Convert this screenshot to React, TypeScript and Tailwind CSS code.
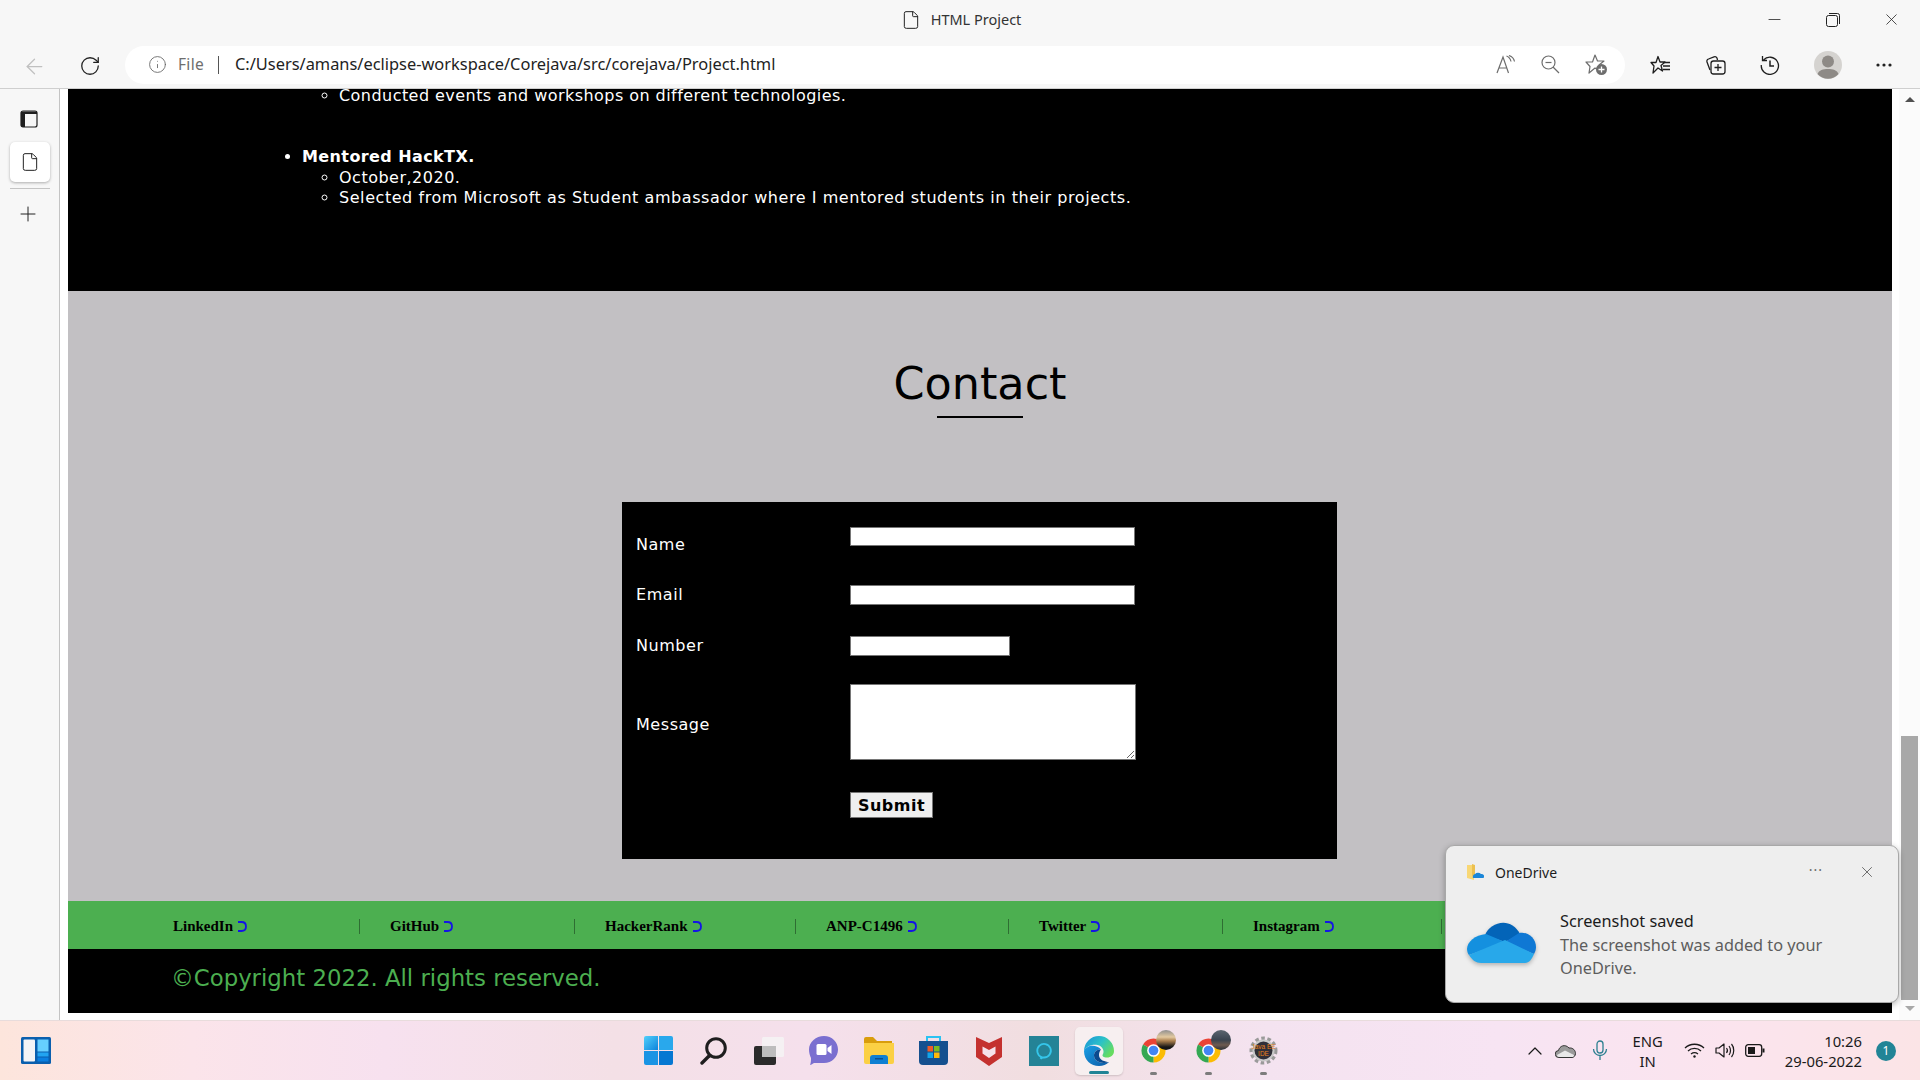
import React from "react";
import { ArrowLeft, ChevronUp, File, Info, Minus, Plus, RotateCw, X } from "lucide-react";

const uiFont = "font-['Noto_Sans','Open_Sans',sans-serif]";
const pageFont = "font-['DejaVu_Sans',sans-serif]";

const links = [
  { name: "LinkedIn", cell: "w-[217px]" },
  { name: "GitHub", cell: "w-[215px]" },
  { name: "HackerRank", cell: "w-[221px]" },
  { name: "ANP-C1496", cell: "w-[213px]" },
  { name: "Twitter", cell: "w-[214px]" },
  { name: "Instagram", cell: "w-[219px]" },
];

const fields = [
  { label: "Name", row: "h-[58px]", pad: "pt-[8px]", input: "w-[285px] h-[19px]" },
  { label: "Email", row: "h-[51px]", pad: "", input: "w-[285px] h-[20px]" },
  { label: "Number", row: "h-[48px]", pad: "", input: "w-[160px] h-[20px]" },
];

const ExternalMark = () => (
  <svg width="10" height="11" viewBox="0 0 10 11" fill="none" className="ml-[4px] shrink-0">
    <path d="M1 1 H4.5 C7.5 1 9 3 9 5.5 C9 8 7.5 10 4.5 10 H1" stroke="#1414e6" strokeWidth="1.8" />
  </svg>
);

const TabsIcon = () => (
  <svg width="18" height="18" viewBox="0 0 18 18" fill="none">
    <rect x="1" y="1" width="16" height="16" rx="2" stroke="#1f1f1f" strokeWidth="1.2" />
    <path d="M1 1.5 H17 V4 H5 V17 H2.5 A1.5 1.5 0 0 1 1 15.5 Z" fill="#1f1f1f" />
  </svg>
);

const FavoritesIcon = () => (
  <svg width="21" height="20" viewBox="0 0 21 20" fill="none" stroke="#1f1f1f" strokeWidth="1.3">
    <path d="M8 1.5 L10 7 H15 L11 10.5 L12.5 16 L8 13 L3 18 L4 11 L1 7.5 H6 Z" strokeLinejoin="round" />
    <path d="M14 7.5 H20 M13 11 H20 M13 14.5 H20" />
  </svg>
);

const CollectionsIcon = () => (
  <svg width="21" height="20" viewBox="0 0 21 20" fill="none" stroke="#1f1f1f" strokeWidth="1.3">
    <path d="M5 15 L2 7 C1.6 5.5 2 4.5 3.5 4 L9 1.8 C10.5 1.3 11.5 2 12 3 L12.5 5" />
    <rect x="6" y="6" width="14" height="13" rx="2.5" />
    <path d="M13 9 V16 M9.5 12.5 H16.5" />
  </svg>
);

const HistoryIcon = () => (
  <svg width="20" height="20" viewBox="0 0 20 20" fill="none" stroke="#1f1f1f" strokeWidth="1.3">
    <path d="M3.5 5 A8.6 8.6 0 1 1 1.3 10" />
    <path d="M2.5 1 V5.5 H7" />
    <path d="M10 5.5 V11 H14" strokeWidth="1.5" />
  </svg>
);

const ReadAloudIcon = () => (
  <svg width="20" height="19" viewBox="0 0 20 19" fill="none" stroke="#6d6d6d" strokeWidth="1.2">
    <path d="M1 18 L7 2 L12.5 18 M3 13 H11" />
    <path d="M10.5 1 C13 2 14.5 4 15 6.5 M13 0.5 C16 1.5 18 4 18.5 6.5" />
  </svg>
);

const ZoomOutIcon = () => (
  <svg width="19" height="19" viewBox="0 0 19 19" fill="none" stroke="#6d6d6d" strokeWidth="1.2">
    <circle cx="7.5" cy="7.5" r="6.5" />
    <path d="M12 12 L18 18" />
    <path d="M4.5 7.5 H10.5" />
  </svg>
);

const StarPlusIcon = () => (
  <svg width="22" height="21" viewBox="0 0 22 21" fill="none">
    <path d="M10 1 L12.5 7 H19 L14 11 L15 17 L10 14 L4 19 L5 12.5 L1 8 H7.5 Z" stroke="#6d6d6d" strokeWidth="1.2" strokeLinejoin="round" />
    <circle cx="16.5" cy="15.5" r="5.5" fill="#6d6d6d" />
    <path d="M16.5 12.5 V18.5 M13.5 15.5 H19.5" stroke="#fff" strokeWidth="1.3" />
  </svg>
);

const Avatar = () => (
  <svg width="28" height="28" viewBox="0 0 28 28">
    <circle cx="14" cy="14" r="14" fill="#d5d3d0" />
    <circle cx="14" cy="10.5" r="6" fill="#8e8a86" />
    <path d="M3.5 23 C5 19 9 18 14 18 C19 18 23 19 24.5 23 A14 14 0 0 1 3.5 23 Z" fill="#8e8a86" />
  </svg>
);

const WidgetsIcon = () => (
  <svg width="30" height="27" viewBox="0 0 30 27">
    <rect width="30" height="27" rx="1.5" fill="#0a5fae" />
    <rect x="2.5" y="2.5" width="11.5" height="22" rx="1" fill="#f4f4f6" />
    <rect x="16.5" y="2.5" width="11" height="12" fill="#66cfff" />
    <rect x="16.5" y="15.5" width="11" height="4" fill="#21a4f1" />
    <rect x="16.5" y="20.5" width="11" height="4" fill="#0a7fe0" />
  </svg>
);

const StartIcon = () => (
  <svg width="29" height="29" viewBox="0 0 29 29">
    <defs>
      <linearGradient id="startA" x1="0" y1="0" x2="1" y2="1">
        <stop offset="0" stopColor="#52d0fb" />
        <stop offset="1" stopColor="#0d84dc" />
      </linearGradient>
    </defs>
    <path d="M2 0 H14 V14 H0 V2 A2 2 0 0 1 2 0 Z" fill="url(#startA)" />
    <path d="M15 0 H27 A2 2 0 0 1 29 2 V14 H15 Z" fill="#29a8ec" />
    <path d="M0 15 H14 V29 H2 A2 2 0 0 1 0 27 Z" fill="#1a94e4" />
    <path d="M15 15 H29 V27 A2 2 0 0 1 27 29 H15 Z" fill="#0678d2" />
  </svg>
);

const SearchIcon = () => (
  <svg width="27" height="28" viewBox="0 0 27 28" fill="none">
    <circle cx="16" cy="11" r="9.3" stroke="#1e1e1e" strokeWidth="3" />
    <path d="M9 19 L2 26" stroke="#1e1e1e" strokeWidth="3.4" strokeLinecap="round" />
  </svg>
);

const TaskViewIcon = () => (
  <svg width="30" height="28" viewBox="0 0 30 28">
    <rect x="0" y="9" width="22" height="19" rx="2" fill="#2b2b2b" />
    <rect x="8" y="0" width="22" height="20" rx="1.5" fill="#f5f5f5" fillOpacity="0.8" />
    <rect x="8" y="9" width="14" height="11" fill="#bdbdbd" />
  </svg>
);

const ChatIcon = () => (
  <svg width="29" height="30" viewBox="0 0 29 30">
    <path d="M15 0 C23 0 29 6 29 13.5 C29 21 23 27 15 27 H5 C3 28 2 29 1 29 C2 26.5 2 24 2 22 C0.8 19.5 0 16.5 0 13.5 C0 6 7 0 15 0 Z" fill="#7a6fd0" />
    <rect x="7.5" y="8" width="10" height="11" rx="1.5" fill="#fff" />
    <path d="M18.5 12 L22.5 9 V18 L18.5 15 Z" fill="#fff" />
  </svg>
);

const ExplorerIcon = () => (
  <svg width="30" height="27" viewBox="0 0 30 27">
    <path d="M0 2 A2 2 0 0 1 2 0 H9 L13 4 H28 V10 H0 Z" fill="#d99d0c" />
    <path d="M0 6 H30 V25 A2 2 0 0 1 28 27 H2 A2 2 0 0 1 0 25 Z" fill="#fbd044" />
    <path d="M6 21 A3 3 0 0 1 9 18 H21 A3 3 0 0 1 24 21 V27 H6 Z" fill="#0f7fd2" />
    <rect x="11" y="21" width="8" height="1.5" fill="#0a4f90" />
  </svg>
);

const StoreIcon = () => (
  <svg width="29" height="31" viewBox="0 0 29 31" fill="none">
    <path d="M8 7 V2 H21 V7" stroke="#2bc2f2" strokeWidth="2" />
    <path d="M0 6 H29 V26 A4 4 0 0 1 25 30 H4 A4 4 0 0 1 0 26 Z" fill="#15508f" />
    <rect x="8.5" y="11" width="5.5" height="5.5" fill="#ef5a28" />
    <rect x="15" y="11" width="5.5" height="5.5" fill="#7cbb20" />
    <rect x="8.5" y="17.5" width="5.5" height="5.5" fill="#12a5ea" />
    <rect x="15" y="17.5" width="5.5" height="5.5" fill="#fdb90a" />
  </svg>
);

const McAfeeIcon = () => (
  <svg width="28" height="31" viewBox="0 0 28 31">
    <path d="M1 2 L14 8 L27 2 V22 L14 31 L1 22 Z" fill="#c4312f" />
    <path d="M7.5 11.5 L14 15 L20.5 11.5 V18.5 L14 23 L7.5 18.5 Z" fill="#f5e2ea" />
  </svg>
);

const AlexaIcon = () => (
  <svg width="30" height="30" viewBox="0 0 30 30" fill="none">
    <rect width="30" height="30" fill="#248396" />
    <path d="M12.5 21 A6.8 6.8 0 1 1 15 21.5 C13.8 21.5 12.8 21.3 11.5 22.8 Z" stroke="#35c6ea" strokeWidth="1.8" />
  </svg>
);

const EdgeIcon = () => (
  <svg width="32" height="32" viewBox="0 0 32 32">
    <defs>
      <linearGradient id="edgeTop" x1="0" y1="0" x2="1" y2="0.6">
        <stop offset="0" stopColor="#1a8fd8" />
        <stop offset="0.55" stopColor="#2bc2c8" />
        <stop offset="1" stopColor="#66dc60" />
      </linearGradient>
      <linearGradient id="edgeLeft" x1="0" y1="0" x2="1" y2="1">
        <stop offset="0" stopColor="#1aa0e6" />
        <stop offset="1" stopColor="#0c5aa6" />
      </linearGradient>
    </defs>
    <path d="M1 16 A15 15 0 0 1 31 16 C31 20 28 22.5 24 22.5 C20.5 22.5 18.5 21 20 19 C21.5 16.5 20 11 14.5 10 C8 9 3 12 1 16 Z" fill="url(#edgeTop)" />
    <path d="M1 16 C1 25 8 31 16 31 C20 31 23.5 29.5 26 27 C20 29.5 11 27 11 20.5 C11 17 14 14 18 14.5 C13 8.5 3 10 1 16 Z" fill="url(#edgeLeft)" />
    <path d="M11 20.5 C11 27 20 29.5 26 27 C22 27 16 25 16 20 C16 17.5 17 15.5 18 14.5 C14 14 11 17 11 20.5 Z" fill="#0b4a8e" />
  </svg>
);

const ChromeIcon = () => (
  <svg width="29" height="29" viewBox="0 0 48 48">
    <path d="M24 24 L6.7 14 A20 20 0 0 1 41.3 14 Z" fill="#ea4335" />
    <path d="M24 24 L41.3 14 A20 20 0 0 1 24 44 Z" fill="#fbbc04" />
    <path d="M24 24 L24 44 A20 20 0 0 1 6.7 14 Z" fill="#34a853" />
    <circle cx="24" cy="24" r="10.5" fill="#fff" />
    <circle cx="24" cy="24" r="8" fill="#4285f4" />
  </svg>
);

const JavaIdeIcon = () => (
  <svg width="29" height="29" viewBox="0 0 29 29" fill="none">
    <circle cx="14.5" cy="14.5" r="12" stroke="#9a9a9a" strokeWidth="4" strokeDasharray="3.5 2.5" />
    <circle cx="14.5" cy="14.5" r="11" fill="#c9c9c9" />
    <circle cx="14.5" cy="14.5" r="9" fill="#2f2f38" />
    <text x="14.5" y="13" textAnchor="middle" fontSize="6.5" fontFamily="Liberation Sans" fill="#e8801c">Java EE</text>
    <text x="14.5" y="20" textAnchor="middle" fontSize="6.5" fontFamily="Liberation Sans" fill="#e8801c">IDE</text>
  </svg>
);

const OneDriveFolder = () => (
  <svg width="17" height="17" viewBox="0 0 17 17">
    <path d="M0 1 H6 L7 3 V16 L0 14 Z" fill="#f8d775" />
    <path d="M5 0 L8 1 V12 H5 Z" fill="#ecc04f" />
    <path d="M6 14 A3 3 0 0 1 8 10 A4 4 0 0 1 14 10 A2.5 2.5 0 0 1 16.5 14 Z" fill="#1a86d8" />
  </svg>
);

const OneDriveCloud = () => (
  <svg width="70" height="46" viewBox="0 0 70 46" className="drop-shadow-[0_2px_2px_rgba(0,0,0,0.25)]">
    <path d="M18 17 C23 4 44 -2 53 16 L38 24 Z" fill="#0364b8" />
    <path d="M52 15 C62 13 69 21 69 29 C69 32 68 34 67 36 L38 24 Z" fill="#0f78d4" />
    <path d="M19 16 C8 17 0 24 0 31 C0 33 1 36 2 37 L38 24 Z" fill="#1490df" />
    <path d="M2 37 C5 42 9 45 14 45 H58 C62 45 65 41 67 36 L38 22 Z" fill="#28a8ea" />
  </svg>
);

const TrayCloud = () => (
  <svg width="21" height="14" viewBox="0 0 21 14">
    <path d="M4 13.5 A3.5 3.5 0 0 1 3.5 6.5 C4.5 2 10 -0.5 14 4 C18 3.5 20.5 6.5 20.5 9.5 C20.5 12 18.5 13.5 17 13.5 Z" fill="#9a9a9a" stroke="#333" strokeWidth="1" />
    <path d="M2 11 L10 6.5 L19 11 C19 12.5 18 13 17 13 H4 C3 13 2 12 2 11 Z" fill="#e8e8e8" />
  </svg>
);

const MicIcon = () => (
  <svg width="16" height="21" viewBox="0 0 16 21" fill="none" stroke="#2b7f90" strokeWidth="1.3">
    <rect x="5" y="1" width="6" height="12" rx="3" />
    <path d="M1.5 9 A6.5 6.5 0 0 0 14.5 9 M8 15.5 V20" />
  </svg>
);

const WifiIcon = () => (
  <svg width="21" height="15" viewBox="0 0 21 15" fill="none" stroke="#1a1a1a" strokeWidth="1.3">
    <path d="M1 5 C6 0 15 0 20 5 M4 8 C7.5 4.5 13.5 4.5 17 8 M7 11 C9 9.5 12 9.5 14 11" />
    <circle cx="10.5" cy="13.5" r="1.2" fill="#1a1a1a" stroke="none" />
  </svg>
);

const VolumeIcon = () => (
  <svg width="20" height="17" viewBox="0 0 20 17" fill="none" stroke="#1a1a1a" strokeWidth="1.2">
    <path d="M1 6 H4 L9 2 V15 L4 11 H1 Z" strokeLinejoin="round" />
    <path d="M11.5 6 C12.7 7.5 12.7 9.5 11.5 11 M14 4 C16 6.5 16 10.5 14 13 M16.5 2 C19.5 5.5 19.5 11.5 16.5 15" />
  </svg>
);

const BatteryIcon = () => (
  <svg width="20" height="13" viewBox="0 0 20 13" fill="none">
    <rect x="0.7" y="0.7" width="16" height="11.6" rx="2.5" stroke="#1a1a1a" strokeWidth="1.3" />
    <rect x="3" y="3" width="7" height="7" fill="#1a1a1a" />
    <rect x="17.5" y="4.5" width="2" height="4" fill="#1a1a1a" />
  </svg>
);

const dockIcons = [
  <StartIcon key="start" />,
  <SearchIcon key="search" />,
  <TaskViewIcon key="taskview" />,
  <ChatIcon key="chat" />,
  <ExplorerIcon key="explorer" />,
  <StoreIcon key="store" />,
  <McAfeeIcon key="mcafee" />,
  <AlexaIcon key="alexa" />,
];

const App: React.FC = () => {
  return (
    <div className={`relative w-[1920px] h-[1080px] overflow-hidden flex flex-col bg-white ${uiFont}`}>
      {/* browser chrome */}
      <header className="h-[89px] shrink-0 bg-[#f7f7f7] border-b border-[#cfcfcf] flex flex-col">
        <div className="h-[45px] flex items-center">
          <div className="flex-1" />
          <div className="flex items-center gap-[10px] ml-[21px] -mt-[5px]">
            <File size={20} strokeWidth={1.2} className="text-[#222]" />
            <span className="text-[14.5px] text-[#333]">HTML Project</span>
          </div>
          <div className="flex-1 flex justify-end items-center gap-[42px] pr-[19px] -mt-[6px]">
            <Minus size={19} strokeWidth={1} className="text-[#222]" />
            <svg width="14" height="14" viewBox="0 0 14 14" fill="none" stroke="#222" strokeWidth="1">
              <rect x="0.5" y="2.5" width="11" height="11" rx="2" />
              <path d="M3 0.5 H11.5 A2 2 0 0 1 13.5 2.5 V11" />
            </svg>
            <X size={19} strokeWidth={1} className="text-[#222]" />
          </div>
        </div>
        <div className="flex-1 flex items-center pl-[22px]">
          <ArrowLeft size={25} strokeWidth={1.2} className="text-[#c0c0c0]" />
          <RotateCw size={22} strokeWidth={1.4} className="ml-[32px] -mt-[2px] text-[#222]" />
          <div className="ml-[24px] w-[1500px] h-[38px] -mt-[4px] rounded-full bg-white flex items-center pl-[23px] pr-[18px]">
            <Info size={19} strokeWidth={1.1} className="text-[#666]" />
            <span className="ml-[11px] text-[15.5px] text-[#6e6e6e] tracking-[0.3px]">File</span>
            <div className="ml-[14px] w-px h-[18px] bg-[#555]" />
            <span className="ml-[16px] text-[16.4px] text-[#222]">C:/Users/amans/eclipse-workspace/Corejava/src/corejava/Project.html</span>
            <div className="ml-auto flex items-center gap-[25px]">
              <ReadAloudIcon />
              <ZoomOutIcon />
              <StarPlusIcon />
            </div>
          </div>
          <div className="ml-[25px] -mt-[4px] flex items-center gap-[34px]">
            <FavoritesIcon />
            <CollectionsIcon />
            <HistoryIcon />
            <Avatar />
            <svg width="16" height="4" viewBox="0 0 16 4" fill="#222">
              <circle cx="2" cy="2" r="1.6" />
              <circle cx="8" cy="2" r="1.6" />
              <circle cx="14" cy="2" r="1.6" />
            </svg>
          </div>
        </div>
      </header>

      <div className="flex flex-1 min-h-0">
        {/* vertical tabs */}
        <aside className="w-[60px] shrink-0 bg-[#f7f7f7] border-r border-[#c4c4c4] flex flex-col items-center">
          <div className="mt-[21px] -ml-[2px]">
            <TabsIcon />
          </div>
          <div className="mt-[14px] w-[40px] h-[40px] rounded-[5px] bg-white shadow-[0_1px_3px_rgba(0,0,0,0.3)] flex items-center justify-center">
            <File size={20} strokeWidth={1.2} className="text-[#222]" />
          </div>
          <div className="mt-[6px] w-[40px] h-px bg-[#c4c4c4]" />
          <Plus size={24} strokeWidth={1} className="mt-[13px] -ml-[3px] text-[#222]" />
        </aside>

        {/* page */}
        <main className={`w-[1824px] ml-[8px] shrink-0 overflow-hidden flex flex-col ${pageFont}`}>
          <section className="h-[202px] shrink-0 bg-black text-white text-[16px] leading-[20.5px] tracking-[0.5px]">
            <ul className="list-disc pl-[234px]">
              <li className="list-none">
                <ul className="list-[circle] pl-[37px]">
                  <li className="leading-[13px] tracking-[0.45px]">Conducted events and workshops on different technologies.</li>
                </ul>
              </li>
              <li className="mt-[45px]">
                <strong className="font-bold tracking-[0.4px]">Mentored HackTX.</strong>
                <ul className="list-[circle] pl-[37px]">
                  <li>October,2020.</li>
                  <li className="tracking-[0.56px]">Selected from Microsoft as Student ambassador where I mentored students in their projects.</li>
                </ul>
              </li>
            </ul>
          </section>

          <section className="h-[610px] shrink-0 bg-[#c2c0c3] flex flex-col items-center">
            <h2 className="mt-[65px] text-[44.5px] leading-[56px] text-black">Contact</h2>
            <div className="mt-[4px] w-[86px] h-[2px] bg-black" />
            <form className="mt-[84px] mr-[1px] w-[715px] h-[357px] bg-black pt-[25px] pl-[14px] text-white text-[16px] leading-[20px] tracking-[0.55px]">
              {fields.map((f) => (
                <div key={f.label} className={`flex items-start ${f.row}`}>
                  <label className={`w-[214px] ${f.pad}`}>{f.label}</label>
                  <input className={`bg-white border border-[#767676] ${f.input}`} />
                </div>
              ))}
              <div className="flex items-start h-[108px]">
                <label className="w-[214px] pt-[31px]">Message</label>
                <textarea className="w-[286px] h-[76px] bg-white border border-[#767676] resize" />
              </div>
              <div className="pl-[214px]">
                <button type="button" className="w-[83px] h-[26px] pt-[2px] bg-[#efefef] border border-[#767676] text-black text-[16px] font-bold tracking-[0.5px]">
                  Submit
                </button>
              </div>
            </form>
          </section>

          <nav className="h-[48px] shrink-0 bg-[#4caf50] flex items-center pl-[75px] font-['Liberation_Serif',serif] font-bold text-[15px] text-black">
            {links.map((l) => (
              <div key={l.name} className={`h-[15px] pl-[30px] flex items-center border-r border-[#2f6e33] translate-y-[1px] ${l.cell}`}>
                <span>{l.name}</span>
                <ExternalMark />
              </div>
            ))}
          </nav>

          <footer className="h-[64px] shrink-0 bg-black flex items-center pl-[103px] pb-[5px] text-[22.8px] text-[#4caf50]">
            ©Copyright 2022. All rights reserved.
          </footer>
        </main>

        {/* scrollbar */}
        <div className="w-[21px] ml-[7px] shrink-0 bg-[#fbfbfb] flex flex-col items-center">
          <div className="mt-[8px] w-0 h-0 border-x-[5px] border-x-transparent border-b-[5px] border-b-[#505050]" />
          <div className="mt-[634px] w-[17px] h-[264px] bg-[#a8a8a8]" />
          <div className="mt-[6px] w-0 h-0 border-x-[5px] border-x-transparent border-t-[5px] border-t-[#a8a8a8]" />
        </div>
      </div>

      {/* taskbar */}
      <div className="h-[60px] shrink-0 border-t border-[#e8dcdc] flex items-center bg-[linear-gradient(90deg,#fde5dc_0%,#fbe4ea_10%,#f7e1ef_20%,#f4e0e6_32%,#f5e0ec_42%,#f1dee0_54%,#f4e3f0_66%,#f7e4f3_78%,#fbe4ee_90%,#fbe4e6_100%)]">
        <div className="w-[631px] shrink-0 pl-[21px]">
          <WidgetsIcon />
        </div>
        <div className="flex items-center">
          {dockIcons.map((icon, i) => (
            <div key={i} className="w-[55px] h-[48px] flex items-center justify-center">
              {icon}
            </div>
          ))}
          <div className="relative w-[48px] h-[48px] mx-[3.5px] rounded-[5px] bg-[#f7eff0] shadow-[0_1px_2px_rgba(0,0,0,0.15)] flex items-center justify-center">
            <EdgeIcon />
            <div className="absolute bottom-[1px] left-[14px] w-[20px] h-[3px] rounded-full bg-[#218496]" />
          </div>
          {[0, 1].map((i) => (
            <div key={i} className="relative w-[55px] h-[48px] flex items-center justify-center">
              <ChromeIcon />
              <div
                className={`absolute top-[3px] left-[30px] w-[20px] h-[20px] rounded-full ${
                  i === 0
                    ? "bg-[linear-gradient(180deg,#8f8f8f_0%,#e3c9a0_35%,#a87d4c_55%,#161616_85%)]"
                    : "bg-[linear-gradient(180deg,#5c6670_0%,#3a4450_50%,#6f5b50_75%,#2a2f38_100%)]"
                }`}
              />
              <div className="absolute bottom-[0px] left-[24px] w-[7px] h-[3px] rounded-full bg-[#7c7c7c]" />
            </div>
          ))}
          <div className="relative w-[55px] h-[48px] flex items-center justify-center">
            <JavaIdeIcon />
            <div className="absolute bottom-[0px] left-[24px] w-[7px] h-[3px] rounded-full bg-[#7c7c7c]" />
          </div>
        </div>
        <div className="ml-auto flex items-center pr-[24px] text-[#1a1a1a]">
          <ChevronUp size={24} strokeWidth={1.2} />
          <div className="ml-[8px]">
            <TrayCloud />
          </div>
          <div className="ml-[16px]">
            <MicIcon />
          </div>
          <div className="ml-[25px] text-[14.8px] leading-[20px] text-center">
            <div>ENG</div>
            <div>IN</div>
          </div>
          <div className="ml-[21px]">
            <WifiIcon />
          </div>
          <div className="ml-[10px]">
            <VolumeIcon />
          </div>
          <div className="ml-[10px]">
            <BatteryIcon />
          </div>
          <div className="ml-[20px] text-[14.8px] leading-[20px] text-right">
            <div>10:26</div>
            <div>29-06-2022</div>
          </div>
          <div className="ml-[14px] w-[20px] h-[20px] rounded-full bg-[#218496] text-white text-[12px] flex items-center justify-center">1</div>
        </div>
      </div>

      {/* OneDrive toast */}
      <div className="absolute left-[1445px] top-[845px] w-[454px] h-[158px] rounded-[9px] bg-[#eeeeee] border border-[#a8a8a8] shadow-[0_2px_6px_rgba(0,0,0,0.3)] pl-[21px] pr-[22px] pt-[17px]">
        <div className="flex items-center h-[18px]">
          <OneDriveFolder />
          <span className="ml-[11px] text-[14px] text-[#1c1c1c]">OneDrive</span>
          <span className="ml-auto text-[#6a6a6a] text-[14px] tracking-[1px] -mt-[6px]">···</span>
          <X size={18} strokeWidth={1} className="ml-[35px] text-[#444]" />
        </div>
        <div className="flex mt-[29px]">
          <div className="mt-[8px] shrink-0">
            <OneDriveCloud />
          </div>
          <div className="ml-[23px] text-[16.3px] leading-[23.5px] text-[#5d5d5d]">
            <div className="text-[#1c1c1c]">Screenshot saved</div>
            <div className="w-[285px]">The screenshot was added to your OneDrive.</div>
          </div>
        </div>
      </div>
    </div>
  );
};

export default App;
